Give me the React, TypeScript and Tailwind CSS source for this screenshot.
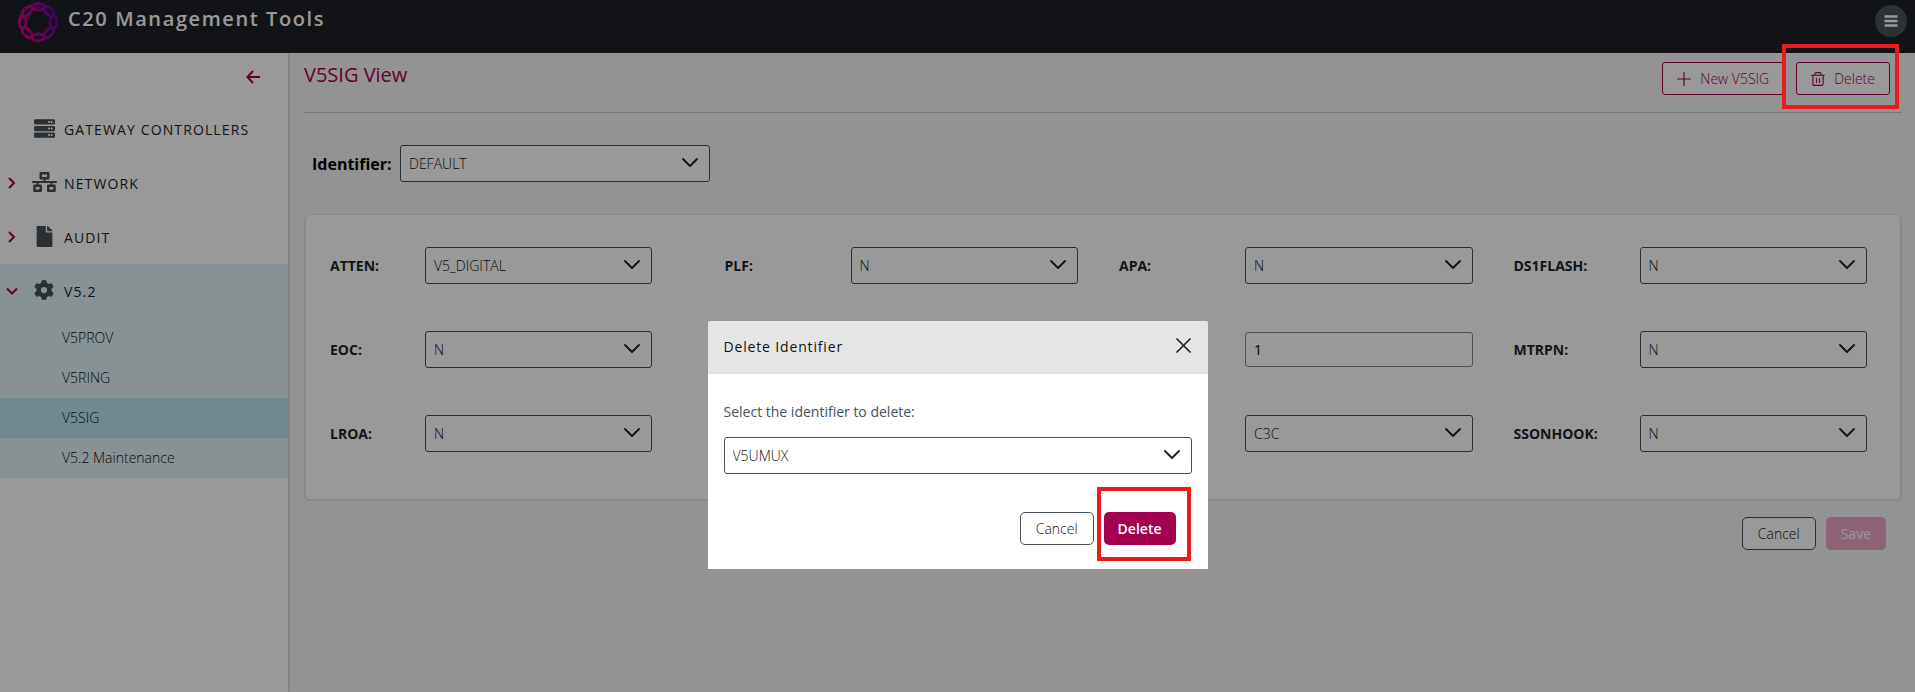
import { useId, type ReactNode } from "react";
import { FaServer, FaNetworkWired, FaFile } from "react-icons/fa";
import { FaGear } from "react-icons/fa6";

function ChainLogo() {
  const links = [0, 45, 90, 135, 180, 225, 270, 315];
  return (
    <svg viewBox="-20 -20 40 40" className="size-10" aria-hidden="true">
      <defs>
        <linearGradient id="chain" gradientUnits="userSpaceOnUse" x1="-18" y1="4" x2="18" y2="-4">
          <stop offset="0" stopColor="#e0007f" />
          <stop offset="0.5" stopColor="#b3009c" />
          <stop offset="1" stopColor="#6a00b0" />
        </linearGradient>
      </defs>
      <g fill="none" stroke="url(#chain)" strokeWidth="2.700">
        {links.map((deg) => {
          const a = (deg * Math.PI) / 180;
          const pts = [];
          for (let i = 0; i < 24; i++) {
            const t = (i / 24) * Math.PI * 2;
            const u = 15.3 + 3.3 * Math.cos(t);
            const v = 6.3 * Math.sin(t);
            pts.push(
              `${(u * Math.cos(a) - v * Math.sin(a)).toFixed(2)} ${(u * Math.sin(a) + v * Math.cos(a)).toFixed(2)}`,
            );
          }
          return <path key={deg} d={`M${pts.join("L")}Z`} />;
        })}
      </g>
    </svg>
  );
}

function Chevron({ className }: { className: string }) {
  return (
    <svg viewBox="0 0 16 10" className={className} fill="none" stroke="currentColor" strokeWidth="1.8" strokeLinecap="round" strokeLinejoin="round" aria-hidden="true">
      <path d="M1 1l7 7 7-7" />
    </svg>
  );
}

function SelectBox({ id, value, label }: { id: string; value: string; label?: string }) {
  return (
    <div className="relative w-full">
      <select
        id={id}
        aria-label={label}
        defaultValue={value}
        className="h-[37px] w-full appearance-none rounded-[3px] border border-[#495057] bg-white pr-10 pl-2 text-sm font-light text-[#111315]"
      >
        <option>{value}</option>
      </select>
      <Chevron className="pointer-events-none absolute top-[13px] right-3 h-[10px] w-4 text-[#1c1f22]" />
    </div>
  );
}

type FieldDef = { label?: string; value: string; kind?: "text" } | null;

const fields: FieldDef[] = [
  { label: "ATTEN:", value: "V5_DIGITAL" },
  { label: "PLF:", value: "N" },
  { label: "APA:", value: "N" },
  { label: "DS1FLASH:", value: "N" },
  { label: "EOC:", value: "N" },
  null,
  { value: "1", kind: "text" },
  { label: "MTRPN:", value: "N" },
  { label: "LROA:", value: "N" },
  null,
  { value: "C3C" },
  { label: "SSONHOOK:", value: "N" },
];

function Field({ field, first }: { field: FieldDef; first: boolean }) {
  const id = useId();
  if (!field) return <div />;
  return (
    <div className={first ? "flex items-center pr-8" : "flex items-center"}>
      <label htmlFor={id} className={`${first ? "w-[95px]" : "w-[126px]"} shrink-0 text-sm font-bold text-[#212529]`}>
        {field.label}
      </label>
      {field.kind === "text" ? (
        <input
          id={id}
          type="text"
          aria-label="Value"
          defaultValue={field.value}
          className="h-[35px] w-full min-w-0 rounded-[3px] border border-[#858585] bg-white px-2 text-sm text-black"
        />
      ) : (
        <SelectBox id={id} value={field.value} label={field.label ? undefined : "Value"} />
      )}
    </div>
  );
}

function NavItem({ icon, text, arrow }: { icon: ReactNode; text: string; arrow?: "right" | "down" }) {
  return (
    <a href="#" className="flex h-[54px] items-center text-sm tracking-[0.08em] text-[#212529]">
      <span className="flex w-6 justify-center text-[#a50050]">
        {arrow && (
          <svg viewBox="0 0 12 12" className="size-3" fill="none" stroke="currentColor" strokeWidth="2" aria-hidden="true">
            <path d={arrow === "right" ? "M3 1l5 5-5 5" : "M1 3.5l5 5 5-5"} />
          </svg>
        )}
      </span>
      <span className="flex w-10 justify-center pb-[2px] text-[#495057]">{icon}</span>
      <span className="pt-[2px]">{text}</span>
    </a>
  );
}

const subItems = ["V5PROV", "V5RING", "V5SIG", "V5.2 Maintenance"];

function Sidebar() {
  return (
    <nav className="w-72 shrink-0 bg-white shadow-[1px_0_2px_rgba(0,0,0,0.2)]">
      <div className="flex h-[49px] justify-end pt-[17px] pr-7">
        <button type="button" aria-label="Collapse menu" className="h-[14px] text-[#a50050]">
          <svg viewBox="0 0 14 14" className="size-[14px]" fill="none" stroke="currentColor" strokeWidth="2" aria-hidden="true">
            <path d="M14 7H1.500M7 1L1.500 7L7 13" />
          </svg>
        </button>
      </div>
      <NavItem icon={<FaServer className="size-[21px]" />} text="GATEWAY CONTROLLERS" />
      <NavItem icon={<FaNetworkWired className="h-5 w-[25px]" />} text="NETWORK" arrow="right" />
      <NavItem icon={<FaFile className="size-[21px]" />} text="AUDIT" arrow="right" />
      <div className="bg-[#e3f2f7]">
        <NavItem icon={<FaGear className="size-5" />} text="V5.2" arrow="down" />
        {subItems.map((s) => (
          <a
            key={s}
            href="#"
            className={`flex h-10 items-center pl-[62px] text-sm font-light text-[#111315] ${s === "V5SIG" ? "bg-[#b9e4ef]" : ""}`}
          >
            {s}
          </a>
        ))}
      </div>
    </nav>
  );
}

const outlineBtn = "flex h-[33px] items-center rounded-[3px] border border-[#a50050] bg-white px-[14px] text-sm font-light text-[#a50050]";
const cancelBtn = "h-[33px] rounded-[5px] border border-[#495057] bg-white px-[15px] text-sm font-light text-[#111315]";

export default function App() {
  return (
    <div className="flex min-h-screen flex-col bg-[#f5f5f5] font-['Open_Sans','Noto_Sans',sans-serif]">
      <header className="flex h-[53px] items-start justify-between bg-[#1e2125] pr-2 pl-[18px]">
        <div className="flex">
          <div className="pt-[2px]">
            <ChainLogo />
          </div>
          <h1 className="pt-[5px] pl-[10px] text-xl leading-7 font-semibold tracking-[0.08em] text-white">C20 Management Tools</h1>
        </div>
        <button type="button" aria-label="Menu" className="mt-[5px] flex size-8 items-center justify-center rounded-full bg-[#4b5358] text-white">
          <svg viewBox="0 0 14 12" className="h-3 w-[14px]" stroke="currentColor" strokeWidth="2.4" aria-hidden="true">
            <path d="M0.500 1.500h13M0.500 6h13M0.500 10.500h13" />
          </svg>
        </button>
      </header>

      <div className="flex grow">
        <Sidebar />
        <main className="min-w-0 grow pr-[13px] pl-4">
          <div className="flex h-[60px] items-start justify-between border-b border-[#c8c8c8] pr-3">
            <h2 className="pt-2 text-xl leading-7 font-medium text-[#a50050]">V5SIG View</h2>
            <div className="flex gap-3 pt-[9px]">
              <button type="button" className={outlineBtn}>
                <svg viewBox="0 0 14 14" className="mr-[9px] size-[14px]" stroke="currentColor" strokeWidth="1.2" strokeLinecap="round" aria-hidden="true">
                  <path d="M7 0.600v12.800M0.600 7h12.800" />
                </svg>
                New V5SIG
              </button>
              <div className="relative">
                <button type="button" className={outlineBtn}>
                  <svg viewBox="0 0 14 14" className="mr-[9px] size-[14px]" fill="none" stroke="currentColor" strokeWidth="1.1" strokeLinecap="round" strokeLinejoin="round" aria-hidden="true">
                    <path d="M0.600 3.200h12.800M1.900 3.200v8.800a1.400 1.400 0 0 0 1.400 1.400h7.400a1.400 1.400 0 0 0 1.400-1.400v-8.800M4 3v-1.200a1.200 1.200 0 0 1 1.200-1.200h3.600a1.200 1.200 0 0 1 1.200 1.200v1.200M5.500 6.500v4M8.500 6.500v4" />
                  </svg>
                  Delete
                </button>
                <div className="pointer-events-none absolute -top-[18px] -right-[9px] -bottom-[14px] -left-[14px] z-50 border-4 border-[#e81c1c]" />
              </div>
            </div>
          </div>

          <div className="flex items-center pt-8 pl-2">
            <label htmlFor="identifier" className="w-[88px] text-base font-bold text-black">
              Identifier:
            </label>
            <div className="w-[310px]">
              <SelectBox id="identifier" value="DEFAULT" />
            </div>
          </div>

          <section className="mt-8 grid grid-cols-4 gap-x-[41px] gap-y-[47px] rounded-md border-2 border-t border-[#dde4ea] bg-white pt-8 pr-[33px] pb-[47px] pl-6">
            {fields.map((f, i) => (
              <Field key={i} field={f} first={i % 4 === 0} />
            ))}
          </section>

          <div className="flex justify-end gap-[10px] pt-4 pr-4">
            <button type="button" className={cancelBtn}>
              Cancel
            </button>
            <button type="button" className="h-[33px] rounded-[5px] bg-[#e9a5c6] px-[15px] text-sm text-white">
              Save
            </button>
          </div>
        </main>
      </div>

      <div className="fixed inset-0 z-40 flex items-start justify-center bg-black/40 pt-[321px]">
        <div role="dialog" aria-modal="true" aria-labelledby="dialog-title" className="w-[500px] rounded-t-[3px] bg-white">
          <div className="flex h-[53px] items-center justify-between rounded-t-[3px] border-b border-[#dee2e6] bg-[#e5e5e5] pr-[17px] pl-4">
            <h3 id="dialog-title" className="text-sm font-medium tracking-[0.06em] text-[#111315]">
              Delete Identifier
            </h3>
            <button type="button" aria-label="Close" className="pb-1 text-[#212529]">
              <svg viewBox="0 0 15 15" className="size-[15px]" stroke="currentColor" strokeWidth="1.7" strokeLinecap="round" aria-hidden="true">
                <path d="M1 1l13 13M14 1L1 14" />
              </svg>
            </button>
          </div>
          <div className="px-4 pt-7 pb-6">
            <label htmlFor="delete-id" className="mb-[15px] block text-sm leading-5 text-[#495057]">
              Select the identifier to delete:
            </label>
            <SelectBox id="delete-id" value="V5UMUX" />
            <div className="flex justify-end gap-[10px] pt-[38px] pr-4">
              <button type="button" className={cancelBtn}>
                Cancel
              </button>
              <div className="relative">
                <button type="button" className="h-[33px] rounded-[5px] bg-[#a50050] px-[14px] text-sm font-semibold text-white">
                  Delete
                </button>
                <div className="pointer-events-none absolute -top-[25px] -right-[15px] -bottom-4 -left-[7px] border-4 border-[#e81c1c]" />
              </div>
            </div>
          </div>
        </div>
      </div>
    </div>
  );
}
